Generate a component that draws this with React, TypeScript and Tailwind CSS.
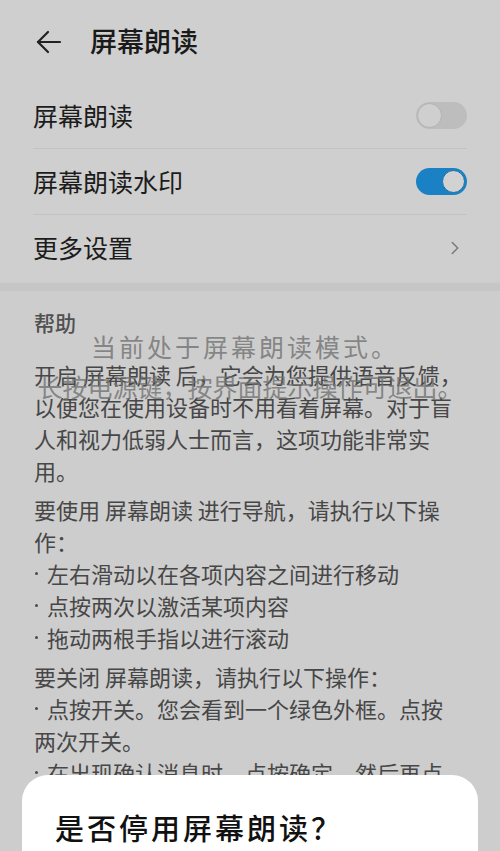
import { ChevronRight } from "lucide-react";

function Toggle({ on }: { on: boolean }) {
  return on ? (
    <div className="flex h-[27px] w-[51px] items-center justify-end rounded-full bg-[#1a82c4] px-[2px]">
      <div className="h-[23px] w-[23px] rounded-full border border-[#1a6fa6] bg-[#d2d2d2]" />
    </div>
  ) : (
    <div className="flex h-[27px] w-[51px] items-center justify-start rounded-full bg-[#bdbdbd] px-[1px]">
      <div className="h-[25px] w-[25px] rounded-full border border-[#b3b3b3] bg-[#cfcfcf]" />
    </div>
  );
}

function Row({
  label,
  right,
  divider = true,
}: {
  label: string;
  right: React.ReactNode;
  divider?: boolean;
}) {
  return (
    <div className={`flex h-[66px] items-center justify-between ${divider ? "border-b border-[#c3c3c3]" : ""}`}>
      <span className="text-[25px] text-[#1c1c1c]">{label}</span>
      {right}
    </div>
  );
}

function Bullet({ children }: { children: React.ReactNode }) {
  return (
    <div className="flex items-center whitespace-nowrap">
      <span className="ml-[1px] mr-[9px] h-[3px] w-[3px] rounded-full bg-[#4a4a4a]" />
      {children}
    </div>
  );
}

export default function App() {
  return (
    <div className="relative h-[851px] w-[500px] overflow-hidden bg-[#cdcdcd] font-['Noto_Sans_CJK_SC','Noto_Sans',sans-serif]">
      {/* 设置列表 */}
      <div className="bg-[#cfcfcf]">
        <header className="flex h-[83px] items-center pl-[36px]">
          <svg width="26" height="24" viewBox="0 0 26 24" fill="none" stroke="#222" strokeWidth="2.2" strokeLinecap="round" strokeLinejoin="round">
            <path d="M24 12H2" />
            <path d="M12 2L2 12l10 10" />
          </svg>
          <h1 className="ml-[28px] text-[27px] font-medium text-[#1a1a1a]">屏幕朗读</h1>
        </header>

        <div className="px-[33px]">
          <Row label="屏幕朗读" right={<Toggle on={false} />} />
          <Row label="屏幕朗读水印" right={<Toggle on />} />
          <Row
            label="更多设置"
            divider={false}
            right={<ChevronRight className="mr-[1px] h-[22px] w-[22px] text-[#787878]" strokeWidth={1.6} />}
          />
        </div>
      </div>

      <div className="mt-[2px] h-[8px] bg-[#c6c6c6]" />

      {/* 帮助 */}
      <div className="px-[34px] pt-[15px] text-[22px] leading-[32px] text-[#474747]">
        <div className="text-[21px] font-medium text-[#505050]">帮助</div>

        <div className="mt-[20px]">
          <div className="whitespace-nowrap">开启 屏幕朗读 后，它会为您提供语音反馈，</div>
          <div className="whitespace-nowrap">以便您在使用设备时不用看着屏幕。对于盲</div>
          <div className="whitespace-nowrap">人和视力低弱人士而言，这项功能非常实</div>
          <div>用。</div>
        </div>

        <div className="mt-[7px]">
          <div className="whitespace-nowrap">要使用 屏幕朗读 进行导航，请执行以下操</div>
          <div>作：</div>
          <Bullet>左右滑动以在各项内容之间进行移动</Bullet>
          <Bullet>点按两次以激活某项内容</Bullet>
          <Bullet>拖动两根手指以进行滚动</Bullet>
        </div>

        <div className="mt-[7px]">
          <div className="whitespace-nowrap">要关闭 屏幕朗读，请执行以下操作：</div>
          <Bullet>点按开关。您会看到一个绿色外框。点按</Bullet>
          <div>两次开关。</div>
          <Bullet>在出现确认消息时，点按确定，然后再点</Bullet>
          <div>按两次确定。</div>
        </div>
      </div>

      {/* 水印 */}
      <div className="pointer-events-none absolute left-0 right-0 top-[326px] flex flex-col items-center text-[25px] leading-[40px] text-[#727272]/80">
        <div className="ml-[-10px] whitespace-nowrap tracking-[3px]">当前处于屏幕朗读模式。</div>
        <div className="whitespace-nowrap">长按电源键，按界面提示操作可退出。</div>
      </div>

      {/* 对话框 */}
      <div className="absolute bottom-0 left-[22px] right-[22px] top-[775px] rounded-t-[26px] bg-white pl-[33px] pt-[32px]">
        <div className="text-[29px] font-medium leading-[40px] tracking-[3px] text-[#111]">是否停用屏幕朗读？</div>
      </div>
    </div>
  );
}
